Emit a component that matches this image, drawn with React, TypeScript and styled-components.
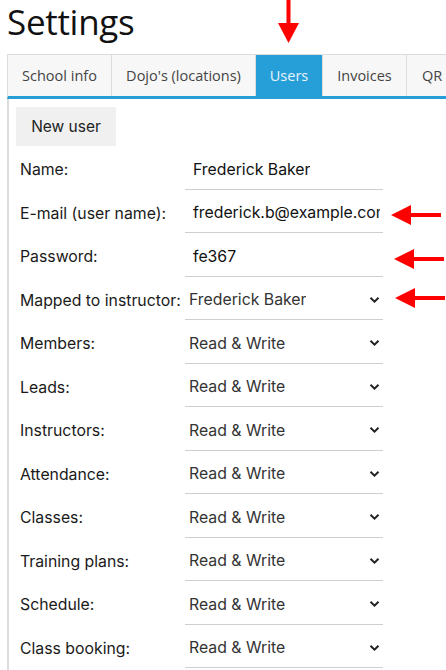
import React from "react";
import styled, { createGlobalStyle } from "styled-components";

const GlobalStyle = createGlobalStyle`
    html, body {
        margin: 0;
        padding: 0;
        background: #ffffff;
        overflow: hidden;
    }
    body {
        font-family: "Open Sans", "Liberation Sans", sans-serif;
    }
`

const Page = styled.div`
    position: relative;
    width: 446px;
    height: 670px;
    overflow: hidden;
`

const Title = styled.h1`
    margin: 0;
    padding: 0 0 0 7px;
    height: 54px;
    font-family: "Open Sans", sans-serif;
    font-weight: 400;
    font-size: 35px;
    line-height: 44px;
    color: #111;
    letter-spacing: -0.3px;
`

const TabBar = styled.div`
    display: flex;
    margin-left: 7px;
    height: 41px;
    border-top: 1px solid #dcdcdc;
    border-left: 1px solid #dcdcdc;
    border-bottom: 3px solid #269fd9;
    background: #f7f7f7;
    white-space: nowrap;
    overflow: hidden;
`

const Tab = styled.div<{ $active?: boolean; $w?: number }>`
    flex: 0 0 ${p => (p.$w ? `${p.$w}px` : "auto")};
    min-width: 0;
    box-sizing: border-box;
    display: flex;
    align-items: center;
    justify-content: ${p => (p.$w ? "center" : "flex-start")};
    padding: ${p => (p.$w ? "0" : "0 15px")};
    font-size: 14.5px;
    font-family: "Open Sans", sans-serif;
    color: ${p => (p.$active ? "#e8f4fb" : "#444")};
    background: ${p => (p.$active ? "#269fd9" : "transparent")};
    border-right: 1px solid #dcdcdc;
`

const Panel = styled.div`
    margin-left: 7px;
    border-left: 2px solid #dcdcdc;
    padding: 8px 0 0 7px;
    min-height: 600px;
`

const NewButton = styled.button`
    border: none;
    background: #f0f0f0;
    width: 100px;
    height: 39px;
    font-family: "Inter", "Noto Sans", sans-serif;
    font-size: 15.5px;
    color: #222;
    padding: 0;
    margin: 0;
    display: block;
`

const Row = styled.div`
    display: flex;
    align-items: stretch;
    height: 43.5px;
`

const Label = styled.div`
    box-sizing: border-box;
    width: 169px;
    padding: 4px 0 0 4px;
    display: flex;
    align-items: center;
    font-family: "Inter", "Noto Sans", sans-serif;
    font-size: 15.8px;
    color: #1a1a1a;
    white-space: nowrap;
`

const Field = styled.div<{ $pad: number }>`
    width: 198px;
    box-sizing: border-box;
    border-bottom: 1.5px solid #cfcfcf;
    display: flex;
    align-items: center;
    justify-content: space-between;
    padding: 4px 3px 0 ${p => p.$pad}px;
    font-family: "Inter", "Noto Sans", sans-serif;
    font-size: 15.8px;
    color: ${p => (p.$pad > 5 ? "#111" : "#333")};
    white-space: nowrap;
    overflow: hidden;
`

const Value = styled.span`
    overflow: hidden;
    min-width: 0;
`

const Overlay = styled.svg<{ $x: number; $y: number }>`
    position: absolute;
    left: ${p => p.$x}px;
    top: ${p => p.$y}px;
`

const Chevron = () => (
    <svg width="11" height="8" viewBox="0 0 11 8" style={{ flex: "none" }}>
        <path d="M1.5 1.8 L5.5 5.6 L9.5 1.8" fill="none" stroke="#222" strokeWidth="2" />
    </svg>
)

const LeftArrow = ({ x, y }: { x: number; y: number }) => (
    <Overlay $x={x} $y={y} width="50" height="24" viewBox="0 0 50 24">
        <polygon points="0,12 20,2 20,22" fill="#ff0000" />
        <rect x="18" y="10" width="32" height="4" fill="#ff0000" />
    </Overlay>
)

type RowData = { label: string; value: string; kind: "text" | "select" };

const rows: RowData[] = [
    { label: "Name:", value: "Frederick Baker", kind: "text" },
    { label: "E-mail (user name):", value: "frederick.b@example.com", kind: "text" },
    { label: "Password:", value: "fe367", kind: "text" },
    { label: "Mapped to instructor:", value: "Frederick Baker", kind: "select" },
    { label: "Members:", value: "Read & Write", kind: "select" },
    { label: "Leads:", value: "Read & Write", kind: "select" },
    { label: "Instructors:", value: "Read & Write", kind: "select" },
    { label: "Attendance:", value: "Read & Write", kind: "select" },
    { label: "Classes:", value: "Read & Write", kind: "select" },
    { label: "Training plans:", value: "Read & Write", kind: "select" },
    { label: "Schedule:", value: "Read & Write", kind: "select" },
    { label: "Class booking:", value: "Read & Write", kind: "select" },
];

const tabs: { name: string; w?: number; active?: boolean }[] = [
    { name: "School info", w: 104 },
    { name: "Dojo's (locations)", w: 144 },
    { name: "Users", w: 67, active: true },
    { name: "Invoices", w: 84 },
    { name: "QR" },
];

export default function App() {
    return (
        <Page>
            <GlobalStyle />
            <Title>Settings</Title>
            <TabBar>
                {tabs.map(t => (
                    <Tab key={t.name} $w={t.w} $active={t.active}>{t.name}</Tab>
                ))}
            </TabBar>
            <Panel>
                <NewButton>New user</NewButton>
                {rows.map(r => (
                    <Row key={r.label}>
                        <Label>{r.label}</Label>
                        <Field $pad={r.kind === "text" ? 8 : 4}>
                            <Value>{r.value}</Value>
                            {r.kind === "select" && <Chevron />}
                        </Field>
                    </Row>
                ))}
            </Panel>
            <Overlay $x={278} $y={0} width="21" height="43" viewBox="0 0 21 43">
                <rect x="8.5" y="0" width="4" height="25" fill="#ff0000" />
                <polygon points="0,23 21,23 10.5,43" fill="#ff0000" />
            </Overlay>
            <LeftArrow x={391} y={203} />
            <LeftArrow x={394} y={247} />
            <LeftArrow x={395} y={286} />
        </Page>
    )
}
